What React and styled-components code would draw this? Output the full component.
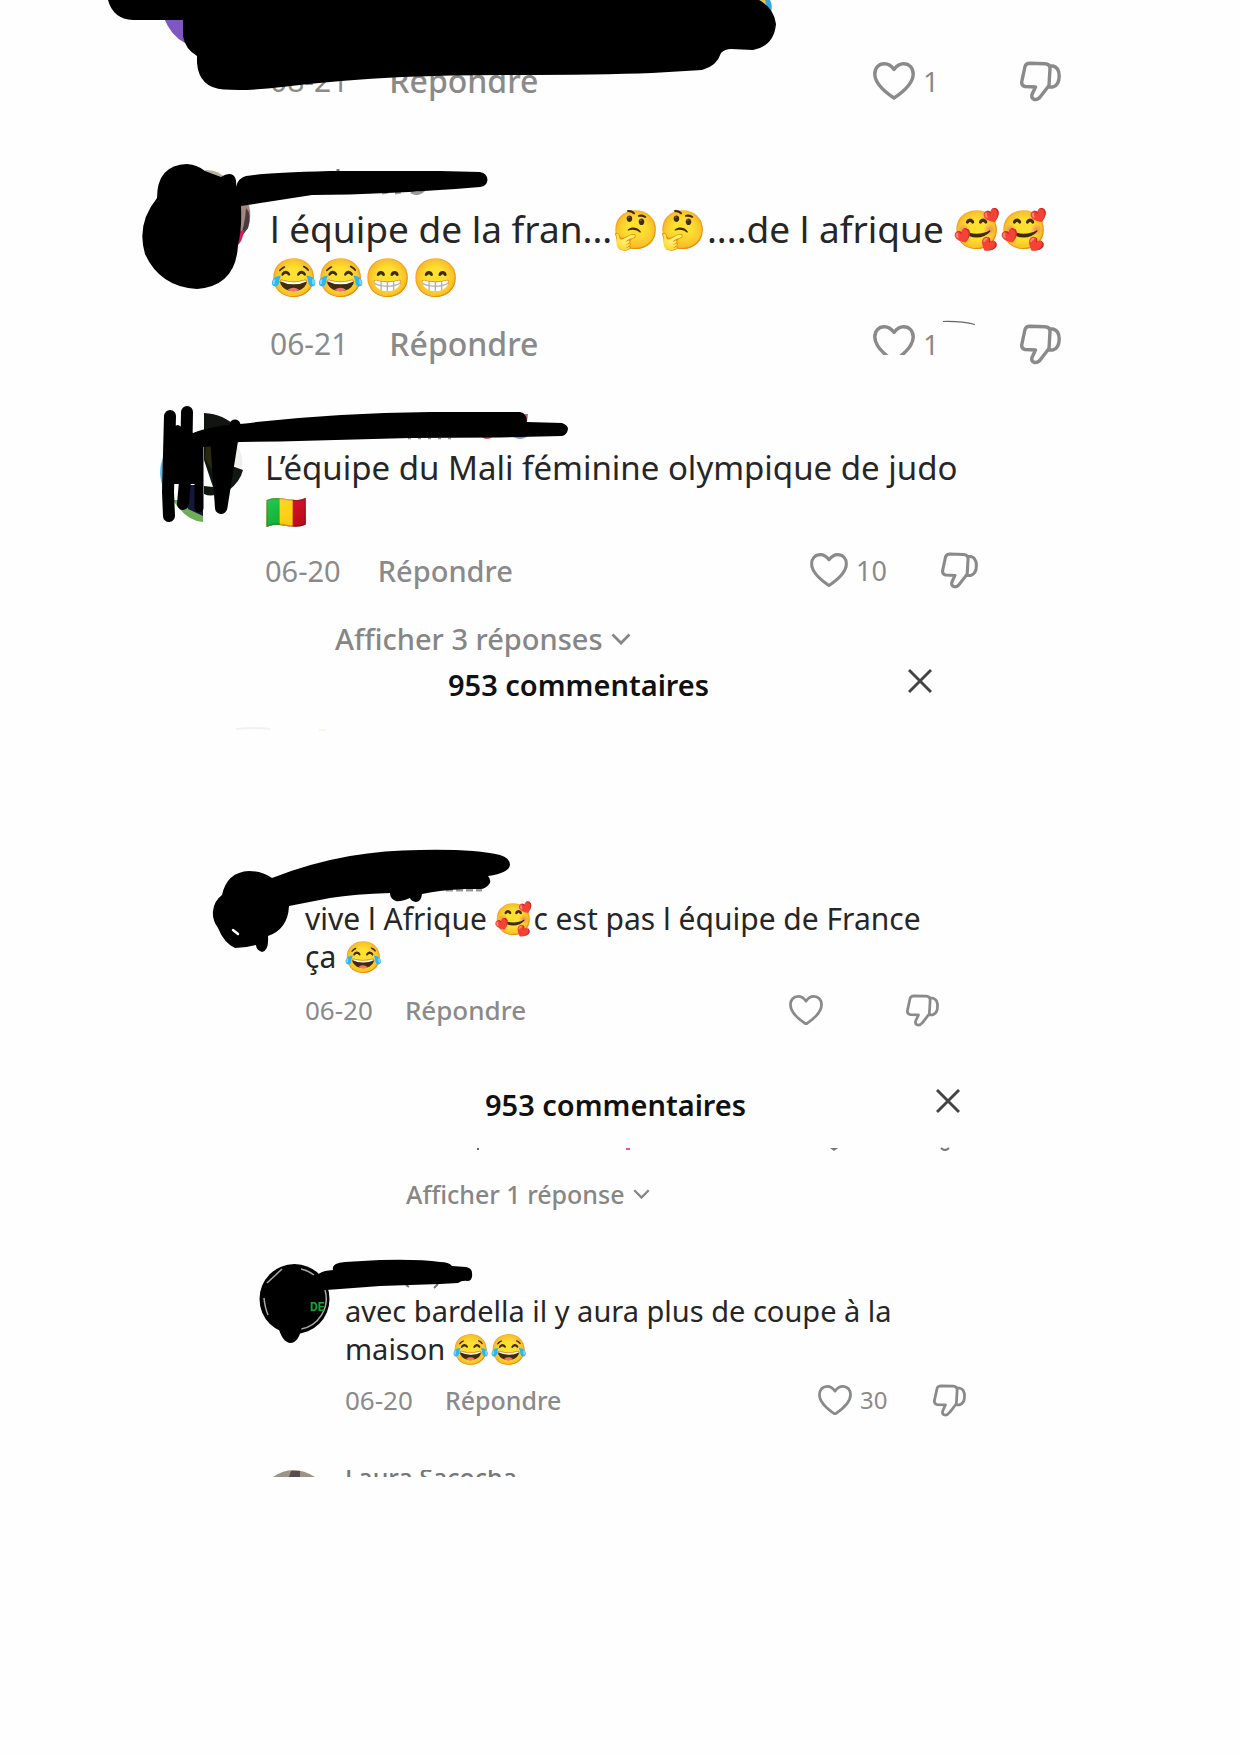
import React from "react";
import styled, { createGlobalStyle } from "styled-components";

const GlobalStyle = createGlobalStyle`
  * { box-sizing: border-box; }
  body {
    margin: 0;
    background: #fefefe;
    color: #262626;
    font-family: "Noto Sans", "Noto Color Emoji", sans-serif;
  }
  button {
    margin: 0;
    padding: 0;
    border: 0;
    background: none;
    color: inherit;
    font: inherit;
    cursor: pointer;
  }
`;

const Page = styled.main`
  display: flex;
  flex-direction: column;
  padding-bottom: 276px;
  overflow: hidden;
`;

const Comment = styled.article`
  position: relative;
  display: flex;
  flex-direction: column;
  gap: ${(p) => p.$gap || 18}px;
  margin-top: ${(p) => p.$top}px;
  margin-left: ${(p) => p.$left}px;
  max-width: ${(p) => p.$width}px;
`;

const Message = styled.p`
  margin: 0;
  font-size: ${(p) => p.$size}px;
  line-height: ${(p) => p.$line}px;
  white-space: nowrap;
`;

const Emoji = styled.span`
  font-family: "Noto Color Emoji", sans-serif;
  font-size: ${(p) => p.$size}px;
  line-height: 1;
`;

const Meta = styled.footer`
  display: flex;
  align-items: center;
  height: ${(p) => p.$height}px;
  color: #8a8a8a;
  font-size: ${(p) => p.$size}px;
  line-height: 1;
`;

const Reply = styled.button`
  margin-left: ${(p) => p.$gap}px;
  margin-right: auto;
  font-size: ${(p) => p.$size}px;
  font-weight: 500;
`;

const Like = styled.button`
  display: flex;
  align-items: center;
  gap: 8px;
  width: ${(p) => p.$width}px;
  font-size: ${(p) => p.$size}px;
`;

const Cropped = styled.span`
  display: flex;
  align-items: center;
  gap: inherit;
  height: 38px;
  clip-path: inset(0 0 8px 0);
`;

const Dislike = styled.button`
  display: flex;
`;

const Replies = styled.button`
  display: flex;
  align-items: center;
  align-self: flex-start;
  gap: 8px;
  height: 28px;
  margin-top: ${(p) => p.$top}px;
  margin-left: ${(p) => p.$left}px;
  color: #868686;
  font-size: ${(p) => p.$size}px;
  font-weight: 500;
  line-height: 28px;
  white-space: nowrap;
`;

const Header = styled.header`
  display: flex;
  align-items: flex-start;
  justify-content: space-between;
  margin-top: ${(p) => p.$top}px;
  margin-left: ${(p) => p.$left}px;
  max-width: ${(p) => p.$width}px;
`;

const Title = styled.h2`
  margin: 0;
  color: #111;
  font-size: 29px;
  font-weight: 600;
  line-height: 32px;
`;

const Close = styled.button`
  display: flex;
`;

const Overlay = styled.svg`
  position: absolute;
  top: ${(p) => p.$y}px;
  left: ${(p) => p.$x}px;
  pointer-events: none;
`;

const Strip = styled.svg`
  display: block;
  margin-top: ${(p) => p.$top}px;
  margin-left: ${(p) => p.$left}px;
`;

const NextComment = styled.div`
  display: flex;
  align-items: flex-start;
  gap: 30px;
  height: 7px;
  margin-top: 54px;
  margin-left: 273px;
  overflow: hidden;
`;

const NextName = styled.span`
  margin-top: -8px;
  color: #777;
  font-size: 25px;
  font-weight: 500;
  line-height: 30px;
`;

function Heart({ size }) {
  return (
    <svg width={size} height={(size * 38) / 42} viewBox="0 0 42 38" fill="none" stroke="#8a8a8a" strokeWidth="3.4" strokeLinejoin="round" aria-hidden="true">
      <path d="M21 7.5C18 3.5 15 1.8 11.5 1.8C5.5 1.8 1.8 6 1.8 12C1.8 21 12 30 21 36C30 30 40.2 21 40.2 12C40.2 6 36.5 1.8 30.5 1.8C27 1.8 24 3.5 21 7.5Z" />
    </svg>
  );
}

function ThumbDown({ size }) {
  return (
    <svg width={size} height={size} viewBox="0 0 41 40" fill="none" stroke="#8a8a8a" strokeWidth="3.4" strokeLinejoin="round" strokeLinecap="round" aria-hidden="true">
      <path d="M10 1.8L25 2.2Q30 2.500 30 7L29 24L20.500 35Q18 38.5 14.5 38Q11 37 12 33L15.5 25.5L5 25Q1.200 24 1.8 20L5 5Q6 1.8 10 1.8Z" />
      <path d="M30 4.500H33Q39.2 6 39.2 14.5Q39.2 23.5 33 25.5H29" />
    </svg>
  );
}

function Chevron({ size }) {
  return (
    <svg width={size} height={size * 0.6} viewBox="0 0 20 12" fill="none" stroke="#868686" strokeWidth="2.8" aria-hidden="true">
      <path d="M1.5 1.5L10 10L18.5 1.5" />
    </svg>
  );
}

function Cross() {
  return (
    <svg width="24" height="24" viewBox="0 0 24 24" stroke="#444" strokeWidth="2.9" aria-hidden="true">
      <path d="M1 1L23 23M23 1L1 23" />
    </svg>
  );
}

function CommentMeta({ date, likes, height, size, reply, replyGap, icon, likeWidth, cropped }) {
  const like = (
    <>
      <Heart size={icon} />
      {likes}
    </>
  );
  return (
    <Meta $height={height} $size={size}>
      <time>{date}</time>
      <Reply type="button" $gap={replyGap} $size={reply}>Répondre</Reply>
      <Like type="button" aria-label="J'aime" $width={likeWidth} $size={size - 2}>
        {cropped ? <Cropped>{like}</Cropped> : like}
      </Like>
      <Dislike type="button" aria-label="Je n'aime pas"><ThumbDown size={icon - 1} /></Dislike>
    </Meta>
  );
}

function Marker({ x, y, width, height, originX, originY, children }) {
  return (
    <Overlay $x={x - originX} $y={y - originY} width={width} height={height} viewBox={`${x} ${y} ${width} ${height}`} aria-hidden="true">
      {children}
    </Overlay>
  );
}

export default function App() {
  return (
    <>
      <GlobalStyle />
      <Page>
        <Comment $top={61} $left={270} $width={791}>
          <CommentMeta date="08-21" likes="1" height={40} size={30} reply={32} replyGap={41} icon={42} likeWidth={147} />
          <Marker x={100} y={0} width={690} height={100} originX={270} originY={61}>
            <path d="M164 18H185V43Q171 36 164 18Z" fill="#7e57c2" />
            <path d="M762 0H770Q773 6 771 12Z" fill="#35a7e0" />
            <path d="M755 0H765L767 7Z" fill="#e8c34a" />
            <path d="M108 0Q113 19 133 20H183V36Q185 49 197 56V63Q199 88 224 89.500Q250 91 282 87Q340 80 402 77Q450 75 501 75Q600 75 652 73L702 70Q717 66 721 53Q725 49 731 49L753 50Q774 46 776 24Q774 8 759 0Z" />
          </Marker>
        </Comment>

        <Comment $top={104} $left={270} $width={791} $gap={23}>
          <Message $size={37} $line={48}>
            l équipe de la fran...<Emoji $size={38}>🤔🤔</Emoji>....de l afrique <Emoji $size={38}>🥰🥰</Emoji>
            <br />
            <Emoji $size={38}>😂😂😁😁</Emoji>
          </Message>
          <CommentMeta date="06-21" likes="1" height={40} size={30} reply={32} replyGap={41} icon={42} likeWidth={147} cropped />
          <Marker x={135} y={155} width={850} height={180} originX={270} originY={205}>
            <path d="M205 170Q219 169 227 180L205 180Z" fill="#b9b59a" />
            <path d="M238 205H249Q252 216 248 228L238 240Z" fill="#a58780" />
            <path d="M246 208Q252 214 248 228L239 240Q245 226 246 208Z" fill="#4a3a3e" />
            <path d="M238 232L244 230Q243 241 237 246Z" fill="#d81b60" />
            <path d="M338 169V176" stroke="#777" strokeWidth="3" />
            <path d="M382 193L388 192M395 193L401 192M411 192Q418 196 424 190" fill="none" stroke="#999" strokeWidth="3" />
            <path d="M157 198Q157 165 187 164Q198 165 205 171L221 177Q228 172 233 175Q237 178 236 187Q238 178 246 176Q262 173 330 171H440L480 172Q487 173 487.500 180Q487 186 480 187Q430 191 387 193Q350 195 312 195L241 206Q242 230 238 245Q236 286 197 289Q160 287 145 254Q136 224 157 198Z" />
            <path d="M943 321.500Q962 321 975 324.500" fill="none" stroke="#666" strokeWidth="1.200" />
          </Marker>
        </Comment>

        <Comment $top={82} $left={265} $width={713}>
          <Message $size={33} $line={44}>
            L’équipe du Mali féminine olympique de judo
            <br />
            <Emoji $size={34}>🇲🇱</Emoji>
          </Message>
          <CommentMeta date="06-20" likes="10" height={36} size={29} reply={29} replyGap={37} icon={38} likeWidth={131} />
          <Marker x={155} y={400} width={420} height={130} originX={265} originY={446}>
            <path d="M204 413Q224 414 236 427V445L222 450V492Q212 498 204 494Z" fill="#101510" />
            <path d="M204 460L213 487L204 486Z" fill="#fff" />
            <path d="M206 447H212V470L205 459Z" fill="#282810" />
            <path d="M232 466L243 470Q240 482 228 491Z" fill="#111711" />
            <path d="M235 443Q244 452 242 469L233 464Z" fill="#f1efec" />
            <path d="M166 452Q156 468 163 488Z" fill="#58b7e4" />
            <path d="M173 500Q186 521 203 522V507L186 500Z" fill="#6fae59" />
            <path d="M190 485H203V516L188 509Z" fill="#15183b" />
            <ellipse cx="487" cy="435" rx="6" ry="4" fill="#d65a67" />
            <ellipse cx="520" cy="434" rx="8" ry="5" fill="#6d98dc" />
            <path d="M525 414L528 414L527 422Z" fill="#c55c76" />
            <path d="M408 438.500H458" stroke="#999" strokeWidth="1.500" strokeDasharray="3 7" />
            <g fill="none" stroke="#000" strokeLinecap="round">
              <path d="M170 416L168 492L169 516" strokeWidth="12" />
              <path d="M187 412L186 470L183 504" strokeWidth="12" />
              <path d="M199 436V508" strokeWidth="9" />
              <path d="M216 436L221 508" strokeWidth="12" />
              <path d="M235 425L222 507" strokeWidth="11" />
            </g>
            <path d="M213 440H232L226 490H218Z" />
            <path d="M166 428L178 425L193 433Q210 426 240 424Q330 413 430 412H520Q527 413 527 422L562 423Q568 425 568 429Q567 435 562 436L500 437.500L410 438L280 441.500L240 442L203 447V484H164Z" />
          </Marker>
        </Comment>

        <Replies type="button" $top={37} $left={335} $size={29}>
          Afficher 3 réponses <Chevron size={20} />
        </Replies>

        <Header $top={16} $left={448} $width={484}>
          <Title>953 commentaires</Title>
          <Close type="button" aria-label="Fermer"><Cross /></Close>
        </Header>

        <Strip $top={26} $left={236} width="100" height="4" viewBox="0 0 100 4" aria-hidden="true">
          <path d="M0 2Q16 0 34 2" fill="none" stroke="#f1f1f1" strokeWidth="2" />
          <path d="M83 3H90" stroke="#f8f6e4" strokeWidth="2" />
        </Strip>

        <Comment $top={169} $left={305} $width={634}>
          <Message $size={30} $line={38}>
            vive l Afrique <Emoji $size={31}>🥰</Emoji>c est pas l équipe de France
            <br />
            ça <Emoji $size={31}>😂</Emoji>
          </Message>
          <CommentMeta date="06-20" height={32} size={26} reply={26} replyGap={32} icon={34} likeWidth={117} />
          <Marker x={205} y={840} width={315} height={120} originX={305} originY={900}>
            <path d="M446 890H482" stroke="#999" strokeWidth="3" strokeDasharray="7 3" />
            <path d="M213 911Q214 901 222 895Q227 872 249 871Q262 871 272 878Q310 863 350 856Q385 850 420 850Q475 849 500 855Q510 858 510 865Q509 873 488 876Q491 879 490 883Q486 889 480 889H465Q440 890 422 894Q421 902 416 902Q411 901 410 898Q400 902 396 901Q390 899 390 893Q355 894 330 898L289 906Q288 929 268 936Q269 951 262 952Q256 950 256 945Q245 948 235 948Q224 943 218 928Q212 920 213 911Z" />
            <path d="M233 930L238 934" stroke="#fff" strokeWidth="2.500" strokeLinecap="round" />
          </Marker>
        </Comment>

        <Header $top={63} $left={485} $width={475}>
          <Title>953 commentaires</Title>
          <Close type="button" aria-label="Fermer"><Cross /></Close>
        </Header>

        <Strip $top={26} $left={476} width="480" height="4" viewBox="0 0 480 4" aria-hidden="true">
          <path d="M1 1H3V3H1Z" fill="#666" />
          <path d="M150 1H154V3H150Z" fill="#f0557c" />
          <path d="M354 1H362L358 4Z" fill="#777" />
          <path d="M465 1Q469 5 473 1" fill="none" stroke="#777" strokeWidth="2" />
        </Strip>

        <Replies type="button" $top={29} $left={406} $size={25}>
          Afficher 1 réponse <Chevron size={17} />
        </Replies>

        <Comment $top={84} $left={345} $width={621} $gap={16}>
          <Message $size={29} $line={38}>
            avec bardella il y aura plus de coupe à la
            <br />
            maison <Emoji $size={30}>😂😂</Emoji>
          </Message>
          <CommentMeta date="06-20" likes="30" height={32} size={26} reply={25} replyGap={32} icon={34} likeWidth={115} />
          <Marker x={255} y={1255} width={225} height={95} originX={345} originY={1294}>
            <circle cx="294.500" cy="1301" r="35" />
            <path d="M301 1271A31 31 0 0 1 314 1277M325 1292A31 31 0 0 1 301 1331M267 1285L282 1271M264 1300Q265 1310 268 1317" fill="none" stroke="#aaa" strokeWidth="1.500" />
            <text x="310" y="1313" fill="#13a538" fontFamily="Roboto, sans-serif" fontSize="12" fontWeight="700">DE</text>
            <path d="M278 1328H302Q299 1345 290 1345Q282 1344 278 1328Z" />
            <path d="M406 1287L409 1289M438 1286L434 1290" stroke="#777" strokeWidth="2" />
            <path d="M317 1279Q318 1273 333 1272Q331 1265 345 1264L380 1262Q420 1261 440 1264Q449 1264 452 1268L466 1269Q472 1270 472 1275Q473 1282 468 1283Q462 1282 458 1285L440 1286L380 1288L340 1291L326 1292Q317 1290 317 1279Z" />
          </Marker>
        </Comment>

        <NextComment>
          <svg width="42" height="7" viewBox="0 0 42 7" aria-hidden="true">
            <path d="M0 7Q20-7 42 7Z" fill="#9d9488" />
            <path d="M18 1H27V7H16Z" fill="#574e49" />
          </svg>
          <NextName>Laura Sacocha</NextName>
        </NextComment>
      </Page>
    </>
  );
}
